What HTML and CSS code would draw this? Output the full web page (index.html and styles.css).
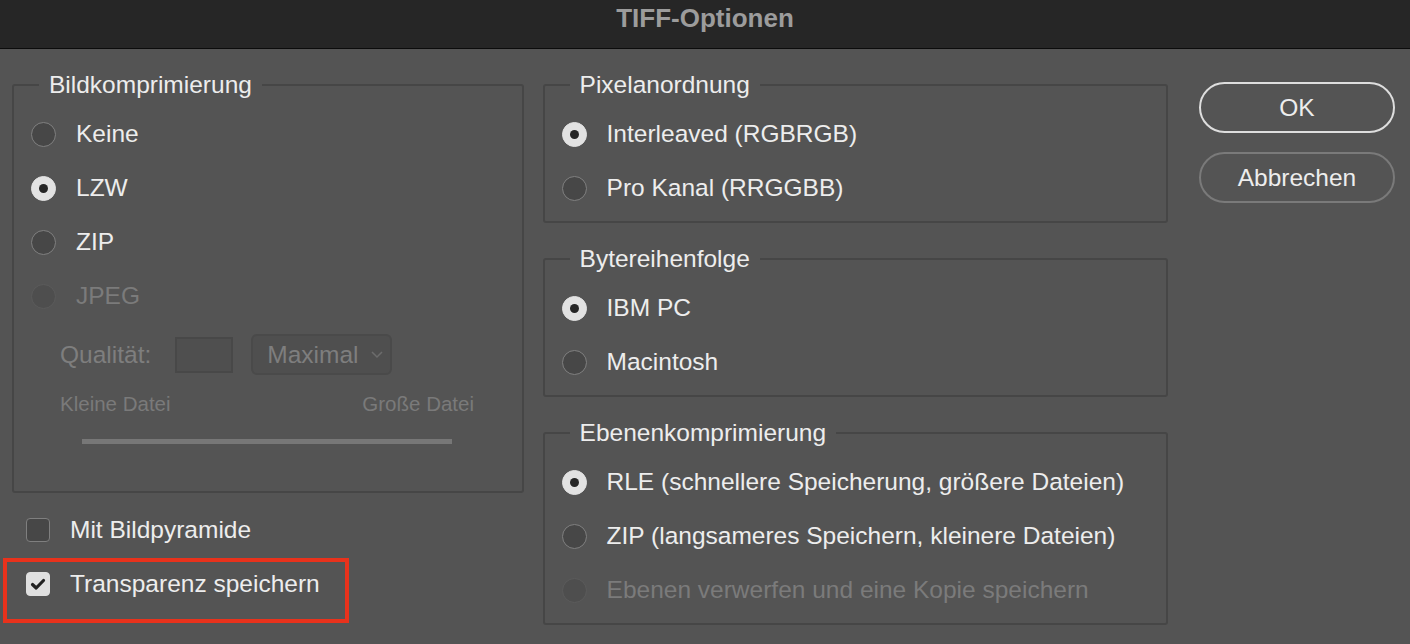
FILE: index.html
```html
<!DOCTYPE html>
<html lang="de">
<head>
<meta charset="utf-8">
<title>TIFF-Optionen</title>
<link rel="stylesheet" href="styles.css">
</head>
<body>
<div class="window">
  <header class="titlebar">TIFF-Optionen</header>
  <main class="content">
    <div class="col-left">
      <fieldset class="group group-image">
        <legend>Bildkomprimierung</legend>
        <div class="radio-row"><span class="radio"></span><span>Keine</span></div>
        <div class="radio-row"><span class="radio on"></span><span>LZW</span></div>
        <div class="radio-row"><span class="radio"></span><span>ZIP</span></div>
        <div class="radio-row disabled"><span class="radio"></span><span>JPEG</span></div>
        <div class="quality-row">
          <span class="quality-label">Qualität:</span>
          <span class="quality-input"></span>
          <span class="quality-select">Maximal
            <svg class="chev" width="12" height="9" viewBox="0 0 12 9"><path d="M1 2 L6 7 L11 2" fill="none" stroke="#6c6c6c" stroke-width="1.5"/></svg>
          </span>
        </div>
        <div class="size-labels"><span>Kleine Datei</span><span>Große Datei</span></div>
        <div class="slider"></div>
      </fieldset>
      <div class="check-row"><span class="checkbox"></span><span>Mit Bildpyramide</span></div>
      <div class="check-row highlighted"><span class="checkbox checked"><svg width="24" height="24" viewBox="0 0 24 24"><path d="M6.5 12.5 L10.2 16 L17.5 8.5" fill="none" stroke="#222" stroke-width="3.2" stroke-linecap="round" stroke-linejoin="round"/></svg></span><span>Transparenz speichern</span></div>
    </div>
    <div class="col-right">
      <fieldset class="group">
        <legend>Pixelanordnung</legend>
        <div class="radio-row"><span class="radio on"></span><span>Interleaved (RGBRGB)</span></div>
        <div class="radio-row"><span class="radio"></span><span>Pro Kanal (RRGGBB)</span></div>
      </fieldset>
      <fieldset class="group">
        <legend>Bytereihenfolge</legend>
        <div class="radio-row"><span class="radio on"></span><span>IBM PC</span></div>
        <div class="radio-row"><span class="radio"></span><span>Macintosh</span></div>
      </fieldset>
      <fieldset class="group">
        <legend>Ebenenkomprimierung</legend>
        <div class="radio-row"><span class="radio on"></span><span>RLE (schnellere Speicherung, größere Dateien)</span></div>
        <div class="radio-row"><span class="radio"></span><span>ZIP (langsameres Speichern, kleinere Dateien)</span></div>
        <div class="radio-row disabled"><span class="radio"></span><span>Ebenen verwerfen und eine Kopie speichern</span></div>
      </fieldset>
    </div>
    <div class="col-buttons">
      <button class="btn btn-default">OK</button>
      <button class="btn">Abbrechen</button>
    </div>
  </main>
</div>
</body>
</html>
```
FILE: styles.css
```css
html, body {
  margin: 0;
  padding: 0;
}
body {
  background: #545454;
  width: 1410px;
  height: 644px;
  overflow: hidden;
  font-family: "Liberation Sans", Arial, sans-serif;
  font-size: 24.5px;
  color: #ededed;
}
.window {
  display: flex;
  flex-direction: column;
  height: 644px;
}
.titlebar {
  height: 48px;
  line-height: 36px;
  background: #262626;
  border-bottom: 1px solid #0c0c0c;
  color: #9c9c9c;
  font-weight: bold;
  font-size: 26px;
  text-align: center;
}
.content {
  display: flex;
  padding: 22px 15px 0 12px;
}
.col-left {
  width: 512px;
  display: flex;
  flex-direction: column;
}
.col-right {
  width: 626px;
  margin-left: 19px;
  display: flex;
  flex-direction: column;
  gap: 22px;
}
.col-buttons {
  width: 196px;
  margin-left: 31px;
  padding-top: 11px;
  display: flex;
  flex-direction: column;
  gap: 19px;
}
.group {
  margin: 0;
  padding: 8px 0 6px 17px;
  border: 2px solid #464646;
  border-radius: 3px;
  min-width: 0;
}
.group legend {
  margin-left: 8px;
  padding: 0 10px;
  line-height: 28px;
  height: 28px;
  color: #ededed;
}
.group-image {
  padding-bottom: 47px;
}
.radio-row {
  display: flex;
  align-items: center;
  height: 54px;
  gap: 20px;
  white-space: nowrap;
}
.radio {
  box-sizing: border-box;
  width: 25px;
  height: 25px;
  border-radius: 50%;
  background: #474747;
  border: 1.5px solid #808080;
  display: flex;
  align-items: center;
  justify-content: center;
  flex: none;
}
.radio.on {
  background: #e2e2e2;
  border-color: #e2e2e2;
}
.radio.on::after {
  content: "";
  width: 9px;
  height: 9px;
  border-radius: 50%;
  background: #262626;
}
.radio-row.disabled {
  color: #7b7b7b;
}
.radio-row.disabled .radio {
  border-color: #5b5b5b;
  background: #4e4e4e;
}
.quality-row {
  display: flex;
  align-items: center;
  height: 41px;
  margin-top: 11px;
  padding-left: 29px;
  color: #7e7e7e;
}
.quality-input {
  box-sizing: border-box;
  width: 58px;
  height: 36px;
  margin-left: 24px;
  border: 2px solid #484848;
  background: #4f4f4f;
}
.quality-select {
  box-sizing: border-box;
  width: 141px;
  height: 41px;
  margin-left: 18px;
  border: 2px solid #4a4a4a;
  border-radius: 6px;
  background: #4f4f4f;
  display: flex;
  align-items: center;
  padding-left: 14px;
  gap: 13px;
  color: #7e7e7e;
}
.chev {
  flex: none;
}
.size-labels {
  display: flex;
  justify-content: space-between;
  width: 414px;
  margin-left: 29px;
  margin-top: 16px;
  font-size: 20.5px;
  line-height: 26px;
  color: #7a7a7a;
}
.slider {
  width: 370px;
  height: 5px;
  margin-left: 51px;
  margin-top: 22px;
  background: #777777;
}
.check-row {
  position: relative;
  display: flex;
  align-items: center;
  height: 54px;
  gap: 20px;
  padding-left: 14px;
}
.col-left > .group + .check-row {
  margin-top: 10px;
}
.checkbox {
  box-sizing: border-box;
  width: 24px;
  height: 24px;
  border-radius: 4px;
  background: #474747;
  border: 1.5px solid #7f7f7f;
  flex: none;
  display: flex;
}
.checkbox.checked {
  background: #e0e0e0;
  border-color: #e0e0e0;
}
.checkbox.checked svg {
  margin: -1.5px;
}
.highlighted::after {
  content: "";
  position: absolute;
  left: -9px;
  top: 1px;
  width: 346px;
  height: 65px;
  box-sizing: border-box;
  border: 4px solid #e8321c;
}
.btn {
  box-sizing: border-box;
  height: 51px;
  width: 196px;
  border-radius: 26px;
  background: transparent;
  border: 2px solid #7a7a7a;
  color: #ededed;
  font-family: "Liberation Sans", Arial, sans-serif;
  font-size: 24.5px;
  padding: 0;
}
.btn-default {
  border-color: #dedede;
}
```
